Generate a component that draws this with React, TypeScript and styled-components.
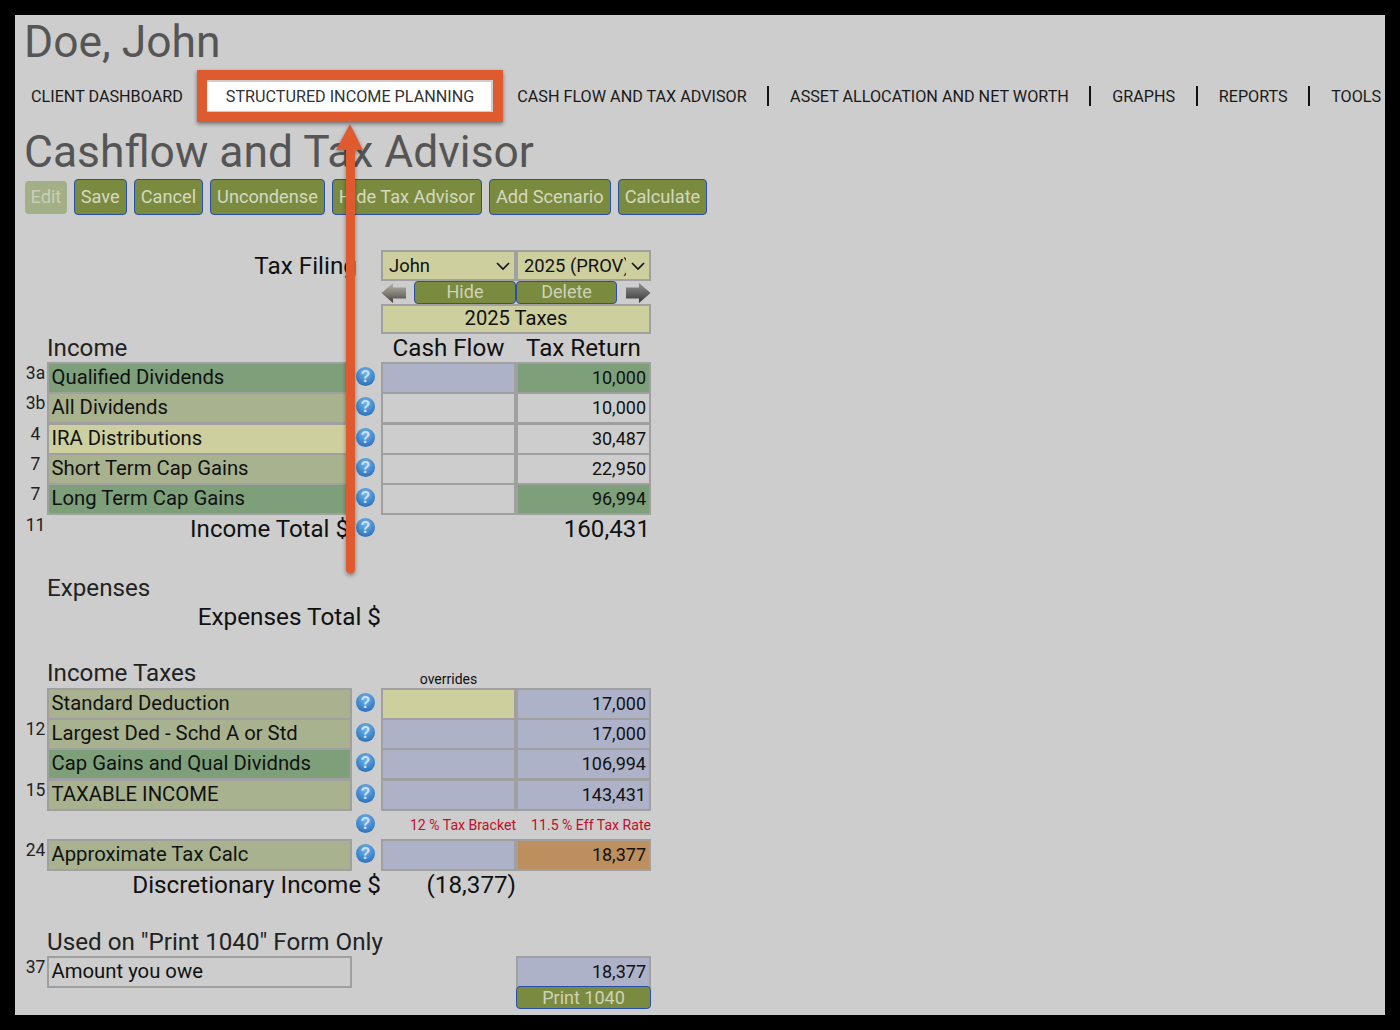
import React from "react";
import styled, { createGlobalStyle } from "styled-components";

const Global = createGlobalStyle`
  html, body { margin: 0; background: #000; }
  body { font-family: Roboto, "Liberation Sans", sans-serif; color: #111; }
`;

const Panel = styled.main`
  position: relative;
  box-sizing: border-box;
  width: 1370px;
  height: 1000px;
  margin: 15px;
  padding-left: 10px;
  background: #cdcdcd;
  overflow: hidden;
`;

const ClientName = styled.h1`
  margin: 0 0 0 -1px;
  height: 54px;
  font-size: 44.4px;
  line-height: 55px;
  font-weight: 400;
  color: #555;
`;

const Nav = styled.nav`
  display: flex;
  align-items: center;
  height: 54px;
  padding-left: 6px;
  white-space: nowrap;
  font-size: 16.18px;
  color: #1a1a1a;
`;

const NavItem = styled.span<{ $sep?: boolean; $first?: boolean }>`
  display: block;
  height: 20px;
  line-height: 21px;
  padding-right: ${(p) => (p.$first ? 0 : 20.5)}px;
  padding-left: ${(p) => (p.$first ? 0 : 21)}px;
  margin-right: ${(p) => (p.$first ? 24 : 0)}px;
  border-right: ${(p) => (p.$sep ? "2px solid #111" : "none")};
`;

const ActiveTab = styled.span`
  display: block;
  height: 29px;
  line-height: 30px;
  padding: 0 17px 0 19px;
  margin-right: 5px;
  background: #fff;
  color: #333;
`;

const PageTitle = styled.h2`
  margin: 0 0 0 -1px;
  height: 56px;
  font-size: 44.4px;
  line-height: 58px;
  font-weight: 400;
  color: #555;
`;

const Toolbar = styled.div`
  display: flex;
  align-items: center;
  gap: 7px;
  height: 36px;
`;

const Button = styled.button<{ $disabled?: boolean }>`
  box-sizing: border-box;
  height: ${(p) => (p.$disabled ? 33 : 36)}px;
  padding: 0 ${(p) => (p.$disabled ? 5.5 : 6)}px 2px;
  font: 400 18.2px Roboto, sans-serif;
  color: ${(p) => (p.$disabled ? "#c9cfb6" : "#d6d8c0")};
  background: ${(p) => (p.$disabled ? "#a3b087" : "#7a8b40")};
  border: ${(p) => (p.$disabled ? "none" : "1.5px solid #2850a8")};
  border-radius: 4px;
`;

const Form = styled.section`
  margin-top: 35px;
`;

const Row = styled.div<{ $h?: number; $top?: number }>`
  display: grid;
  grid-template-columns: 22px 305px 29px 135px 135px;
  height: ${(p) => p.$h ?? 30.35}px;
  margin-top: ${(p) => p.$top ?? 0}px;
  align-items: center;
`;

const LineNo = styled.span`
  grid-column: 1;
  align-self: start;
  text-align: center;
  margin-left: -1px;
  font-size: 17.5px;
  line-height: 22px;
  white-space: nowrap;
  color: #222;
`;

const Cell = styled.div<{ $bg?: string; $col?: number }>`
  grid-column: ${(p) => p.$col ?? "auto"};
  box-sizing: border-box;
  height: 100%;
  border: 2px solid #a0a0a0;
  background: ${(p) => p.$bg ?? "#cdcdcd"};
`;

const Label = styled(Cell)`
  grid-column: 2;
  padding-left: 2.5px;
  font-size: 20.3px;
  line-height: 27px;
  white-space: nowrap;
`;

const Value = styled(Cell)`
  padding-right: 3px;
  text-align: right;
  font-size: 18px;
  line-height: 28px;
`;

const Heading = styled.div`
  grid-column: 2 / span 2;
  font-size: 24.2px;
  line-height: 28px;
  color: #222;
  white-space: nowrap;
`;

const ColHead = styled.div<{ $col: number }>`
  grid-column: ${(p) => p.$col};
  text-align: center;
  font-size: 24.2px;
  line-height: 28px;
`;

const Total = styled.div<{ $inset?: number; $narrow?: boolean }>`
  grid-column: ${(p) => (p.$narrow ? "2" : "2 / span 2")};
  text-align: right;
  padding-right: ${(p) => p.$inset ?? 0}px;
  font-size: ${(p) => (p.$narrow ? 24.1 : 24.3)}px;
  line-height: 30px;
  white-space: nowrap;
`;

const TotalValue = styled.div<{ $col: number }>`
  grid-column: ${(p) => p.$col};
  text-align: right;
  padding-right: ${(p) => (p.$col === 4 ? 0 : 1)}px;
  font-size: 24.2px;
  line-height: 30px;
`;

const Help = styled.span`
  grid-column: 3;
  justify-self: center;
  width: 19px;
  height: 19px;
  margin: -3px 2px 0 0;
  border-radius: 50%;
  background: radial-gradient(circle at 50% 30%, #74b4ea 0%, #3f88ce 55%, #1f5fa8 100%);
  color: #cfe0f1;
  font: 700 16px/19px "Liberation Sans", sans-serif;
  text-align: center;
`;

const SelectWrap = styled.div<{ $col: number }>`
  position: relative;
  grid-column: ${(p) => p.$col};
  height: 30.5px;
  align-self: start;
`;

const Select = styled.select`
  appearance: none;
  box-sizing: border-box;
  width: 100%;
  height: 100%;
  padding: 1px 23px 0 6px;
  border: 2px solid #a0a0a0;
  border-radius: 0;
  background: #cdcf9e;
  font: 400 18.4px Roboto, sans-serif;
  color: #111;
`;

const Chevron = styled.svg`
  position: absolute;
  top: 12px;
  right: 6px;
  pointer-events: none;
`;

const ControlCell = styled.div`
  grid-column: 4 / span 2;
  display: grid;
  grid-template-columns: 25px 8px 102px 101px 9px 25px;
  align-items: center;
  height: 100%;
`;

const SmallButton = styled.button<{ $col: number }>`
  grid-column: ${(p) => p.$col};
  box-sizing: border-box;
  height: 23px;
  padding: 0 0 2px;
  font: 400 18px/18px Roboto, sans-serif;
  color: #cfd2b8;
  background: #7a8b40;
  border: 1.5px solid #2850a8;
  border-radius: 4px;
`;

const TaxesBanner = styled(Cell)`
  grid-column: 4 / span 2;
  text-align: center;
  font-size: 20.2px;
  line-height: 24px;
`;

const Overrides = styled.div`
  grid-column: 4;
  align-self: end;
  text-align: center;
  font-size: 14px;
  line-height: 18px;
`;

const Note = styled.div<{ $col: number }>`
  grid-column: ${(p) => p.$col};
  text-align: right;
  font-size: 14.1px;
  line-height: 32px;
  color: #c00f2a;
  white-space: nowrap;
`;

const WideCell = styled(Value)`
  grid-column: 5;
`;

const PrintButton = styled.button`
  grid-column: 5;
  box-sizing: border-box;
  height: 23px;
  padding: 0;
  font: 400 18px/22px Roboto, sans-serif;
  color: #cfd2b8;
  background: #7a8b40;
  border: 1.5px solid #2850a8;
  border-radius: 4px;
`;

const Highlight = styled.div`
  position: absolute;
  left: 182px;
  top: 55px;
  width: 306px;
  height: 52px;
  box-sizing: border-box;
  border: 10px solid #e05a30;
  box-shadow: 0 2px 4px rgba(0, 0, 0, 0.45);
  pointer-events: none;
`;

const Pointer = styled.svg`
  position: absolute;
  left: 310px;
  top: 105px;
  pointer-events: none;
  filter: drop-shadow(0 2px 2px rgba(0, 0, 0, 0.4));
`;

const GREEN = "#7da07b";
const OLIVE = "#a8b28f";
const YELLOW = "#cdcf9e";
const BLUE = "#adb2c8";
const ORANGE = "#bd8f5f";
const PLAIN = "#cdcdcd";

const LeftArrow = styled.svg`
  grid-column: 1;
`;

const RightArrow = styled.svg`
  grid-column: 6;
  transform: scaleX(-1);
`;

const ARROW = "M0.5 11 L12 1 V5.5 H25 V16.5 H12 V21 Z";

const Chev = () => (
  <Chevron width="14" height="9" viewBox="0 0 14 9">
    <path d="M1 1 L7 7 L13 1" fill="none" stroke="#111" strokeWidth="1.6" />
  </Chevron>
);

type RowData = { no?: string; label: string; labelBg: string; cash: string; ret: string; retBg: string };

const income: RowData[] = [
  { no: "3a", label: "Qualified Dividends", labelBg: GREEN, cash: BLUE, ret: "10,000", retBg: GREEN },
  { no: "3b", label: "All Dividends", labelBg: OLIVE, cash: PLAIN, ret: "10,000", retBg: PLAIN },
  { no: "4", label: "IRA Distributions", labelBg: YELLOW, cash: PLAIN, ret: "30,487", retBg: PLAIN },
  { no: "7", label: "Short Term Cap Gains", labelBg: OLIVE, cash: PLAIN, ret: "22,950", retBg: PLAIN },
  { no: "7", label: "Long Term Cap Gains", labelBg: GREEN, cash: PLAIN, ret: "96,994", retBg: GREEN },
];

const taxes: RowData[] = [
  { label: "Standard Deduction", labelBg: OLIVE, cash: YELLOW, ret: "17,000", retBg: BLUE },
  { no: "12", label: "Largest Ded - Schd A or Std", labelBg: OLIVE, cash: BLUE, ret: "17,000", retBg: BLUE },
  { label: "Cap Gains and Qual Dividnds", labelBg: GREEN, cash: BLUE, ret: "106,994", retBg: BLUE },
  { no: "15", label: "TAXABLE INCOME", labelBg: OLIVE, cash: BLUE, ret: "143,431", retBg: BLUE },
];

function DataRow({ row }: { row: RowData }) {
  return (
    <Row>
      {row.no ? <LineNo>{row.no}</LineNo> : null}
      <Label $bg={row.labelBg}>{row.label}</Label>
      <Help>?</Help>
      <Cell $col={4} $bg={row.cash} />
      <Value $col={5} $bg={row.retBg}>{row.ret}</Value>
    </Row>
  );
}

export default function App() {
  return (
    <>
      <Global />
      <Panel>
        <ClientName>Doe, John</ClientName>
        <Nav>
          <NavItem $first>CLIENT DASHBOARD</NavItem>
          <ActiveTab>STRUCTURED INCOME PLANNING</ActiveTab>
          <NavItem $sep>CASH FLOW AND TAX ADVISOR</NavItem>
          <NavItem $sep>ASSET ALLOCATION AND NET WORTH</NavItem>
          <NavItem $sep>GRAPHS</NavItem>
          <NavItem $sep>REPORTS</NavItem>
          <NavItem>TOOLS</NavItem>
        </Nav>
        <PageTitle>Cashflow and Tax Advisor</PageTitle>
        <Toolbar>
          <Button $disabled>Edit</Button>
          <Button>Save</Button>
          <Button>Cancel</Button>
          <Button>Uncondense</Button>
          <Button>Hide Tax Advisor</Button>
          <Button>Add Scenario</Button>
          <Button>Calculate</Button>
        </Toolbar>

        <Form>
          <Row $h={31}>
            <Total $inset={24}>Tax Filing</Total>
            <SelectWrap $col={4}>
              <Select defaultValue="John"><option>John</option></Select>
              <Chev />
            </SelectWrap>
            <SelectWrap $col={5}>
              <Select defaultValue="2025 (PROV)"><option>2025 (PROV)</option></Select>
              <Chev />
            </SelectWrap>
          </Row>
          <Row $h={23}>
            <ControlCell>
              <LeftArrow width="25" height="22" viewBox="0 0 25 22">
                <defs>
                  <linearGradient id="arrowLeft" x1="0" y1="0" x2="0" y2="1">
                    <stop offset="0" stopColor="#b4b4aa" />
                    <stop offset="0.6" stopColor="#77776f" />
                    <stop offset="1" stopColor="#3e3e3a" />
                  </linearGradient>
                </defs>
                <path d={ARROW} fill="url(#arrowLeft)" />
              </LeftArrow>
              <SmallButton $col={3}>Hide</SmallButton>
              <SmallButton $col={4}>Delete</SmallButton>
              <RightArrow width="25" height="22" viewBox="0 0 25 22">
                <defs>
                  <linearGradient id="arrowRight" x1="0" y1="0" x2="0" y2="1">
                    <stop offset="0" stopColor="#8f8f8f" />
                    <stop offset="0.6" stopColor="#5c5c5c" />
                    <stop offset="1" stopColor="#333" />
                  </linearGradient>
                </defs>
                <path d={ARROW} fill="url(#arrowRight)" />
              </RightArrow>
            </ControlCell>
          </Row>
          <Row $h={29.6}>
            <TaxesBanner $bg={YELLOW}>2025 Taxes</TaxesBanner>
          </Row>
          <Row $h={28.4}>
            <Heading>Income</Heading>
            <ColHead $col={4}>Cash Flow</ColHead>
            <ColHead $col={5}>Tax Return</ColHead>
          </Row>
          {income.map((r) => <DataRow key={r.label} row={r} />)}
          <Row>
            <LineNo>11</LineNo>
            <Total $narrow $inset={3}>Income Total $</Total>
            <Help>?</Help>
            <TotalValue $col={5}>160,431</TotalValue>
          </Row>

          <Row $h={28} $top={30}>
            <Heading>Expenses</Heading>
          </Row>
          <Row $h={27}>
            <Total>Expenses Total $</Total>
          </Row>

          <Row $h={29.5} $top={29}>
            <Heading>Income Taxes</Heading>
            <Overrides>overrides</Overrides>
          </Row>
          {taxes.map((r) => <DataRow key={r.label} row={r} />)}
          <Row>
            <Help>?</Help>
            <Note $col={4}>12 % Tax Bracket</Note>
            <Note $col={5}>11.5 % Eff Tax Rate</Note>
          </Row>
          <Row>
            <LineNo>24</LineNo>
            <Label $bg={OLIVE}>Approximate Tax Calc</Label>
            <Help>?</Help>
            <Cell $col={4} $bg={BLUE} />
            <Value $col={5} $bg={ORANGE}>18,377</Value>
          </Row>
          <Row $h={30}>
            <Total>Discretionary Income $</Total>
            <TotalValue $col={4}>(18,377)</TotalValue>
          </Row>

          <Row $h={28} $top={28}>
            <Heading>Used on "Print 1040" Form Only</Heading>
          </Row>
          <Row>
            <LineNo>37</LineNo>
            <Label>Amount you owe</Label>
            <WideCell $bg={BLUE}>18,377</WideCell>
          </Row>
          <Row $h={23}>
            <PrintButton>Print 1040</PrintButton>
          </Row>
        </Form>

        <Highlight />
        <Pointer width="60" height="460" viewBox="0 0 60 460">
          <path d="M25 4 L38 30 H30 V449 a4.5 4.5 0 0 1 -9 0 V30 H11 Z" fill="#e05a30" />
        </Pointer>
      </Panel>
    </>
  );
}
